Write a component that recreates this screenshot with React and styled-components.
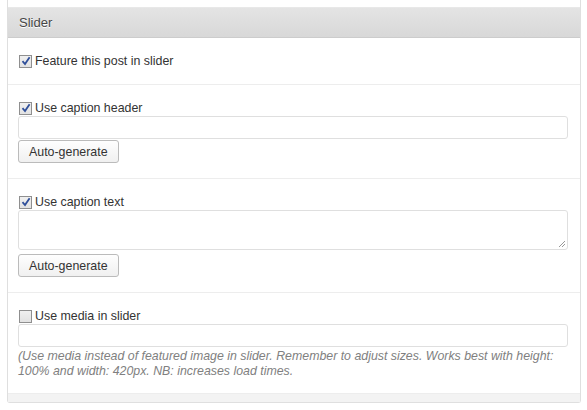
import React from "react";
import styled, { createGlobalStyle } from "styled-components";

const GlobalStyle = createGlobalStyle`
  body {
    margin: 0;
    background: #ffffff;
    font-family: Arial, "Liberation Sans", sans-serif;
  }
`;

const Page = styled.div`
  width: 587px;
  height: 410px;
  padding-left: 7px;
  box-sizing: border-box;
  overflow: hidden;
`;

const Box = styled.div`
  width: 574px;
  box-sizing: border-box;
  border: 1px solid #dfdfdf;
  border-top: none;
  border-radius: 0 0 3px 3px;
  padding-top: 7px;
  background: #fff;
`;

const Header = styled.h3`
  margin: 0;
  height: 31px;
  line-height: 30px;
  padding: 0 11px;
  font-size: 13px;
  font-weight: normal;
  color: #464646;
  background: linear-gradient(to bottom, #e4e4e4, #d8d8d8);
  border-top: 1px solid #e8e8e8;
  border-bottom: 1px solid #cccccc;
  text-shadow: 0 1px 0 #fff;
  box-sizing: border-box;
`;

const Section = styled.div`
  padding: 15px 10px ${(p) => p.$bottom || 15}px;
  border-bottom: 1px solid #ededed;
  display: flex;
  flex-direction: column;
  align-items: flex-start;
`;

const Row = styled.label`
  display: flex;
  align-items: center;
  gap: 3px;
  font-size: 12.4px;
  color: #333;
  height: 16px;
`;

const Box13 = styled.span`
  width: 11px;
  height: 11px;
  border: 1px solid #8f8f8f;
  background: linear-gradient(to bottom, #f0f0f0, #e2e2e2);
  display: inline-flex;
  align-items: center;
  justify-content: center;
  margin-left: 1px;
`;

const TextInput = styled.div`
  width: 550px;
  height: ${(p) => p.$h || 23}px;
  box-sizing: border-box;
  border: 1px solid #dfdfdf;
  border-radius: 3px;
  background: #fff;
  position: relative;
`;

const Grip = styled.svg`
  position: absolute;
  right: 1px;
  bottom: 1px;
`;

const Button = styled.button`
  margin-top: ${(p) => p.$gap || 1}px;
  height: 23px;
  padding: 0 10px;
  font-family: Arial, "Liberation Sans", sans-serif;
  font-size: 12.4px;
  color: #333;
  border: 1px solid #bbb;
  border-radius: 3px;
  background: linear-gradient(to bottom, #fefefe, #f0f0f0);
`;

const Note = styled.p`
  margin: 2px 0 0;
  font-size: 12.35px;
  font-style: italic;
  color: #808080;
  line-height: 15px;
  width: 552px;
`;

const Footer = styled.div`
  height: 8px;
  background: #f3f3f3;
`;

const Check = ({ on, children }) => (
  <Row>
    <Box13>
      {on && (
        <svg width="10" height="10" viewBox="0 0 10 10">
          <path d="M1.5 5.2 L4 8 L8.6 1.2" fill="none" stroke="#2f4f9a" strokeWidth="1.8" />
        </svg>
      )}
    </Box13>
    {children}
  </Row>
);

export default function App() {
  return (
    <Page>
      <GlobalStyle />
      <Box>
        <Header>Slider</Header>
        <Section>
          <Check on>Feature this post in slider</Check>
        </Section>
        <Section>
          <Check on>Use caption header</Check>
          <TextInput />
          <Button>Auto-generate</Button>
        </Section>
        <Section>
          <Check on>Use caption text</Check>
          <TextInput $h={40}>
            <Grip width="9" height="9" viewBox="0 0 9 9">
              <path d="M8 2 L2 8 M8 5 L5 8" stroke="#999" strokeWidth="1" />
            </Grip>
          </TextInput>
          <Button $gap={4}>Auto-generate</Button>
        </Section>
        <Section $bottom={14}>
          <Check>Use media in slider</Check>
          <TextInput />
          <Note>
            (Use media instead of featured image in slider. Remember to adjust sizes. Works best with height: 100% and
            width: 420px. NB: increases load times.
          </Note>
        </Section>
        <Footer />
      </Box>
    </Page>
  );
}
